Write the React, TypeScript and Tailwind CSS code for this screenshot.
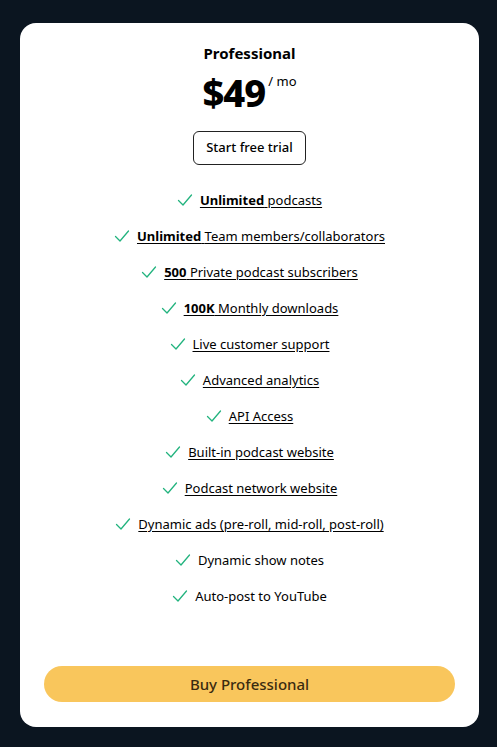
import React from "react";

interface Feature {
  bold?: string;
  text: string;
  underline: boolean;
}

const features: Feature[] = [
  { bold: "Unlimited", text: "podcasts", underline: true },
  { bold: "Unlimited", text: "Team members/collaborators", underline: true },
  { bold: "500", text: "Private podcast subscribers", underline: true },
  { bold: "100K", text: "Monthly downloads", underline: true },
  { text: "Live customer support", underline: true },
  { text: "Advanced analytics", underline: true },
  { text: "API Access", underline: true },
  { text: "Built-in podcast website", underline: true },
  { text: "Podcast network website", underline: true },
  { text: "Dynamic ads (pre-roll, mid-roll, post-roll)", underline: true },
  { text: "Dynamic show notes", underline: false },
  { text: "Auto-post to YouTube", underline: false },
];

const Check = () => (
  <svg width="16" height="16" viewBox="0 0 16 16" fill="none" className="shrink-0">
    <path d="M1.5 8.5l4.5 4.5 8.5-10" stroke="#22b37e" strokeWidth="1.3" strokeLinecap="round" strokeLinejoin="round" />
  </svg>
);

const App: React.FunctionComponent = () => {
  return (
    <div className="min-h-[747px] bg-[#0b1520] pl-5 pt-[23px] pb-[22px] font-['Noto_Sans',sans-serif]">
      <div className="w-[459px] bg-white rounded-[16px] px-6 pt-[20px] pb-[25px] flex flex-col items-center text-black">
        <h2 className="text-[15px] font-bold leading-5">Professional</h2>
        <div className="flex items-start mt-[7px]">
          <span className="text-[38px] font-extrabold leading-[44px] tracking-tight">$49</span>
          <span className="text-[13px] leading-4 mt-[3px] ml-[3px]">/ mo</span>
        </div>
        <button className="mt-[17px] h-[34px] px-3 border border-[#222] rounded-md text-[13px] font-medium">
          Start free trial
        </button>
        <ul className="mt-[25px] flex flex-col gap-[16px] w-full items-center">
          {features.map((f, i) => (
            <li key={i} className="flex items-center gap-[7px] h-5 text-[13px] leading-5">
              <Check />
              <span className={f.underline ? "underline underline-offset-2" : ""}>
                {f.bold && <span className="font-bold">{f.bold} </span>}
                {f.text}
              </span>
            </li>
          ))}
        </ul>
        <button className="mt-[60px] w-full h-[36px] rounded-full bg-[#f9c65c] text-[#3a2b10] text-[15px] font-medium">
          Buy Professional
        </button>
      </div>
    </div>
  );
};

export default App;
